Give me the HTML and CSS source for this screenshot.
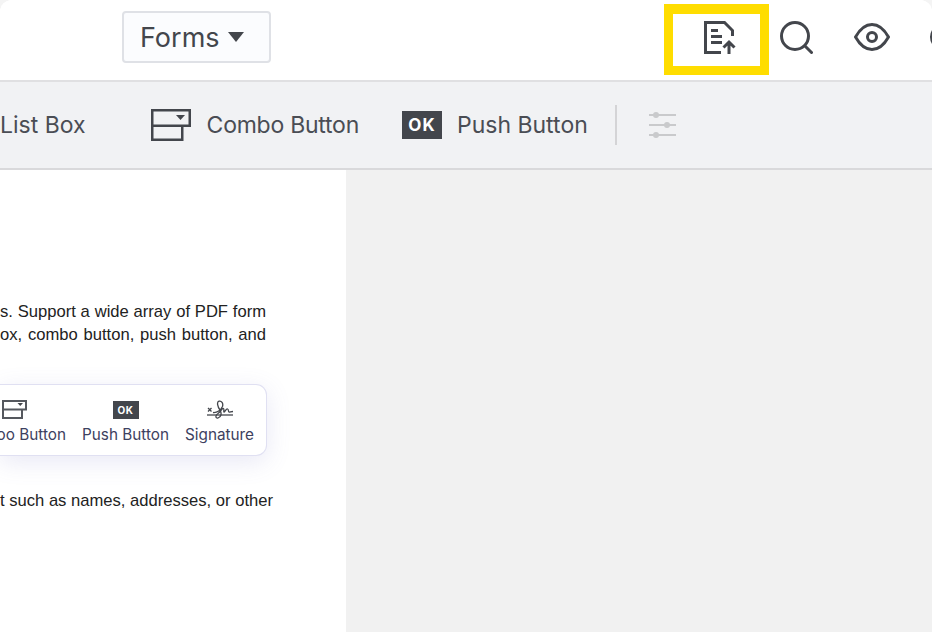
FILE: index.html
```html
<!DOCTYPE html>
<html lang="en">
<head>
<meta charset="utf-8">
<title>Forms</title>
<link rel="stylesheet" href="styles.css">
</head>
<body>
<div class="app">
  <header class="topbar">
    <button class="forms-btn">Forms<span class="caret"></span></button>
    <div class="top-actions">
      <div class="highlight">
        <svg width="32" height="34" viewBox="0 0 32 34" fill="none" stroke="#43464c" stroke-width="3">
          <path d="M17 31.500H1.500V1.500H20.500L28.500 9.500V15"/>
          <path d="M7 9.500h7M7 15.500h11M7 21.500h11"/>
          <path d="M25 33V21M19.500 26.500L25 21l5.500 5.500"/>
        </svg>
      </div>
      <svg class="ic-search" width="33" height="33" viewBox="0 0 33 33" fill="none" stroke="#43464c" stroke-width="3">
        <circle cx="15" cy="15" r="13.500"/>
        <path d="M25 25l6.500 6.500" stroke-linecap="round"/>
      </svg>
      <svg class="ic-eye" width="36" height="28" viewBox="0 0 36 28" fill="none" stroke="#43464c" stroke-width="3">
        <path d="M1.500 14C6 6 12 1.500 18 1.500S30 6 34.500 14C30 22 24 26.500 18 26.500S6 22 1.500 14Z" stroke-linejoin="round"/>
        <circle cx="18" cy="14" r="4.500"/>
      </svg>
      <span class="ic-cut"></span>
    </div>
  </header>
  <nav class="toolbar">
    <span class="tool first">List Box</span>
    <span class="tool combo">
      <svg width="40" height="32" viewBox="0 0 40 32" fill="none" stroke="#43464c" stroke-width="2.500">
        <path d="M1.250 1.250h37.500v15.500H1.250zM1.250 16.750v14h30v-14"/>
        <path d="M25 6h9l-4.500 5z" fill="#43464c" stroke="none"/>
      </svg>
      Combo Button
    </span>
    <span class="tool push"><span class="ok">OK</span>Push Button</span>
    <span class="divider"></span>
    <svg class="ic-sliders" width="27" height="26" viewBox="0 0 27 26" fill="none" stroke="#c9cacc" stroke-width="2">
      <path d="M0 3h27M0 13h27M0 23h27"/>
      <circle cx="7" cy="3" r="3" fill="#c9cacc" stroke="none"/>
      <circle cx="18" cy="13" r="3" fill="#c9cacc" stroke="none"/>
      <circle cx="7" cy="23" r="3" fill="#c9cacc" stroke="none"/>
    </svg>
  </nav>
  <main class="workspace">
    <section class="page">
      <p class="para">s. Support a wide array of PDF form<br>ox, combo button, push button, and</p>
      <div class="float-bar">
        <div class="float-item combo-item">
          <svg width="25" height="19" viewBox="0 0 25 19" fill="none" stroke="#55585e" stroke-width="2">
            <path d="M1 1h23v8.500H1zM1 9.500V18h19V9.500"/>
            <path d="M15.500 3h5.500l-2.750 3z" fill="#43464c" stroke="none"/>
          </svg>
          <span>oo Button</span>
        </div>
        <div class="float-item">
          <span class="ok small">OK</span>
          <span>Push Button</span>
        </div>
        <div class="float-item">
          <svg width="26" height="19" viewBox="0 0 26 19" fill="none" stroke="#43464c" stroke-width="1.300">
            <path d="M0 15h26"/>
            <path d="M1 8l3.500 3.500M4.500 8L1 11.500"/>
            <path d="M6 12.500c4 .5 8-2.500 9.500-6C16.500 3.500 14.500.5 12 1.200 9.500 2 10.500 6.500 13 10c1.800 3.200 1.500 6.800-2 8-2.800.5-2.800-2.800 0-4.500 3-2.200 4-5.500 5.500-5 1 .5-.2 3 .5 3.500s2-3.500 3.500-3 .5 2.500 1.500 3 1.500-.5 4-.5"/>
          </svg>
          <span>Signature</span>
        </div>
      </div>
      <p class="para last">t such as names, addresses, or other</p>
    </section>
    <section class="gutter"></section>
  </main>
</div>
</body>
</html>
```

FILE: styles.css
```css
* { box-sizing: border-box; }
html, body { margin: 0; height: 100%; background: #f4f4f4; }
body { overflow: hidden; font-family: Inter, "Liberation Sans", sans-serif; color: #43464c; }
.app { width: 932px; height: 632px; display: flex; flex-direction: column; border-radius: 12px 12px 0 0; overflow: hidden; background: #fff; }

.topbar { height: 82px; flex: none; background: #fff; border-bottom: 2px solid #e0e0e2; display: flex; align-items: flex-start; padding: 11px 0 0 122px; }
.forms-btn { flex: none; width: 149px; height: 52px; padding: 0 0 0 16px; display: flex; align-items: center; background: #fbfcfe; border: 2px solid #dfe1e6; border-radius: 4px; font: 400 27px/1 Inter, sans-serif; color: #43464c; }
.caret { margin-left: 8px; width: 0; height: 0; border-left: 8px solid transparent; border-right: 8px solid transparent; border-top: 10px solid #43464c; }
.top-actions { display: flex; align-items: flex-start; flex: none; margin-left: 393px; margin-top: -7px; height: 71px; }
.highlight { flex: none; width: 105px; height: 71px; border: solid #ffdd00; border-width: 10px 9px 9px; padding: 7px 0 0 31px; }
.highlight svg { display: block; }
.ic-search { flex: none; margin-left: 11px; margin-top: 17px; }
.ic-eye { flex: none; margin-left: 41px; margin-top: 19px; }
.ic-cut { flex: none; margin-left: 40px; margin-top: 20px; width: 26px; height: 26px; border: 3px solid #43464c; border-radius: 50%; }

.toolbar { height: 88px; flex: none; background: #f1f2f4; border-bottom: 2px solid #d9d9db; display: flex; align-items: center; font-size: 23px; color: #4a4d54; white-space: nowrap; }
.tool { display: flex; align-items: center; }
.first { margin-left: 0; }
.combo { margin-left: 65px; gap: 16px; letter-spacing: -.25px; }
.push { margin-left: 43px; }
.ok { width: 40px; height: 28px; margin-right: 15px; background: #43464c; color: #fff; font-size: 17px; font-weight: 700; letter-spacing: 1px; display: flex; align-items: center; justify-content: center; }
.divider { width: 2px; height: 40px; background: #d4d4d6; margin-left: 27px; }
.ic-sliders { margin-left: 32px; }

.workspace { flex: 1; display: flex; min-height: 0; }
.page { width: 346px; flex: none; background: #fff; overflow: hidden; padding-top: 130px; }
.gutter { flex: 1; background: #f1f1f1; }
.para { margin: 0; width: 266px; font: 16.6px/23px "Liberation Sans", Arial, sans-serif; color: #222; white-space: normal; text-align: justify; text-align-last: justify; }
.para.last { width: 280px; margin-top: 33px; text-align: left; text-align-last: left; }

.float-bar { width: 267px; height: 72px; margin-top: 38px; background: #fff; border: 1px solid #e0e0f2; border-left: 0; border-radius: 0 11px 11px 0; box-shadow: 0 6px 24px rgba(110, 110, 190, .16); display: flex; gap: 16px; align-items: flex-start; padding-top: 15px; color: #3d4160; font-size: 15.3px; white-space: nowrap; }
.float-item { display: flex; flex-direction: column; align-items: center; gap: 7px; }
.float-item span:last-child { line-height: 17px; }
.combo-item { width: 66px; align-items: flex-end; }
.combo-item svg { align-self: flex-start; margin-left: 2px; }
.ok.small { width: 26px; height: 18px; margin: 1px 0 0; font-size: 10px; letter-spacing: .5px; }
```
